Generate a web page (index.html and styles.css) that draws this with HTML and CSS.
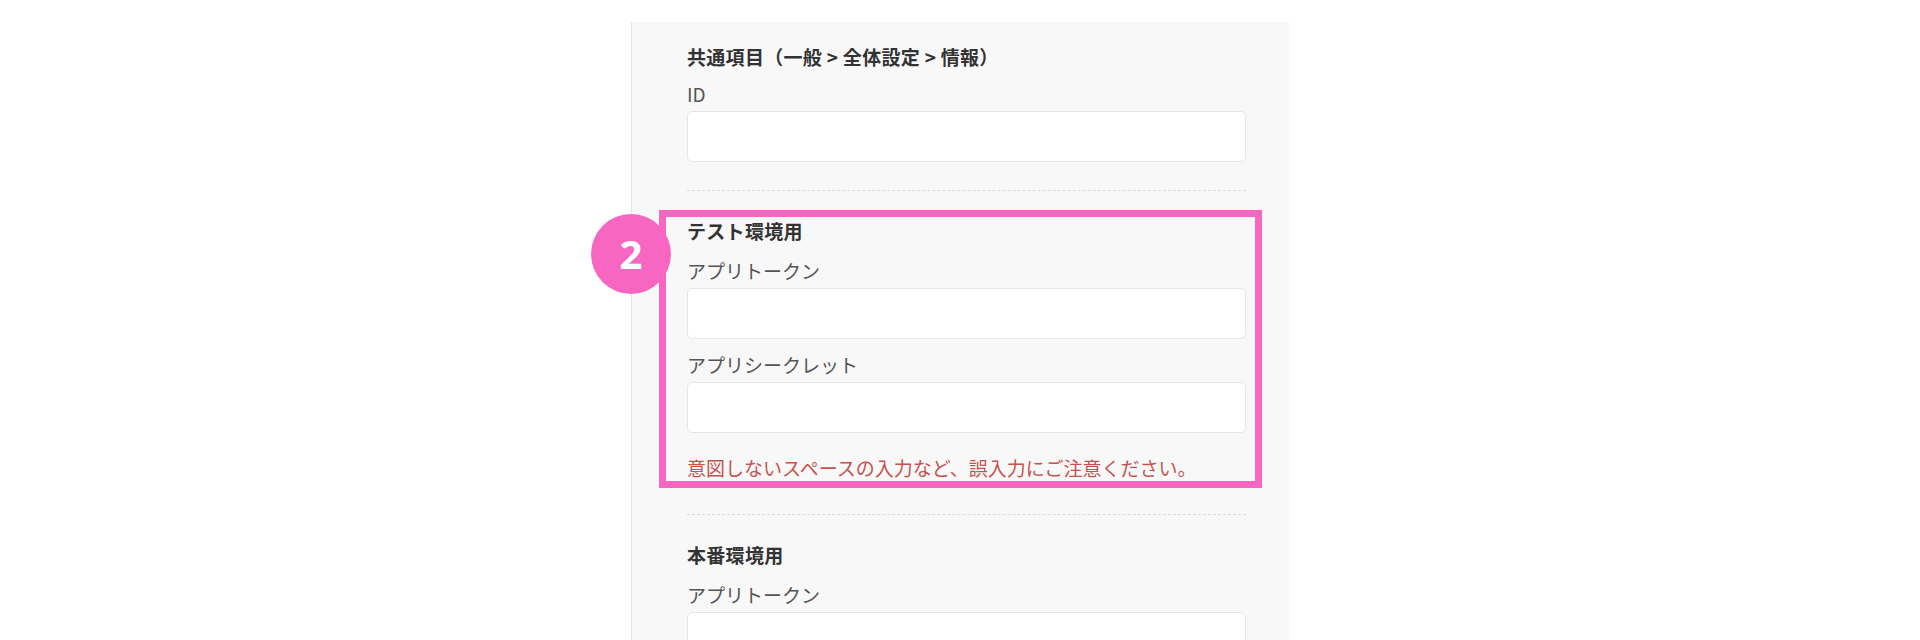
FILE: index.html
```html
<!DOCTYPE html>
<html>
<head>
<meta charset="utf-8" />
<title>連携設定</title>
<link rel="stylesheet" href="styles.css">
</head>
<body>

<div id="wp">
	<div class="section">
		<h3 class="ttl">共通項目（一般 &gt; 全体設定 &gt; 情報）</h3>
		<div class="field">
			<label>ID</label>
			<input type="text" class="txt" />
		</div>
	</div>

	<div class="section">
		<div class="callout"></div>
		<div class="badge">2</div>
		<h3 class="ttl">テスト環境用</h3>
		<div class="field">
			<label>アプリトークン</label>
			<input type="text" class="txt" />
		</div>
		<div class="field">
			<label>アプリシークレット</label>
			<input type="text" class="txt" />
		</div>
		<p class="note">意図しないスペースの入力など、誤入力にご注意ください。</p>
	</div>

	<div class="section">
		<h3 class="ttl">本番環境用</h3>
		<div class="field">
			<label>アプリトークン</label>
			<input type="text" class="txt" />
		</div>
	</div>
</div>
</body>
</html>
```

FILE: styles.css
```css
html * { margin:0; padding:0; box-sizing:border-box; }
html, body { height:100%; overflow:hidden; }
body { background:#fff; font-family:"Noto Sans CJK JP", "Noto Sans", sans-serif; font-size:19px; color:#555; }

#wp {
	width:658px;
	min-height:700px;
	margin:22px auto 0;
	padding:22px 43px 0 55px;
	background:#f8f8f8;
	border-left:1px solid #e4e4e4;
}

.section{
	position:relative;
	padding-bottom:28px;
	border-bottom:1px dashed #dcdcdc;
}
.section + .section{
	padding-top:27px;
}
.section:first-child .ttl{
	margin-bottom:11px;
}
.section:last-child{
	border-bottom:0;
}

.ttl{
	font-size:19px;
	line-height:26px;
	font-weight:bold;
	color:#333;
	margin-bottom:14px;
	letter-spacing:0.3px;
}

.field{
	margin-bottom:13px;
}
.field:last-child{
	margin-bottom:0;
}
.field label{
	display:block;
	line-height:26px;
	margin-bottom:4px;
	color:#555;
}
.txt{
	display:block;
	width:100%;
	height:51px;
	background:#fff;
	border:1px solid #e6e6e6;
	border-radius:5px;
	outline:none;
}

.note{
	margin-top:22px;
	margin-bottom:5px;
	line-height:26px;
	color:#c4534f;
}

/* annotation */
.callout{
	position:absolute;
	top:19px;
	left:-28px;
	right:-16px;
	bottom:26px;
	border:7px solid #f767c1;
	pointer-events:none;
}
.badge{
	position:absolute;
	top:23px;
	left:-96px;
	width:80px;
	height:80px;
	border-radius:50%;
	background:#f767c1;
	color:#fff;
	font-family:"Noto Sans", sans-serif;
	font-weight:bold;
	font-size:40px;
	line-height:80px;
	text-align:center;
}
```
